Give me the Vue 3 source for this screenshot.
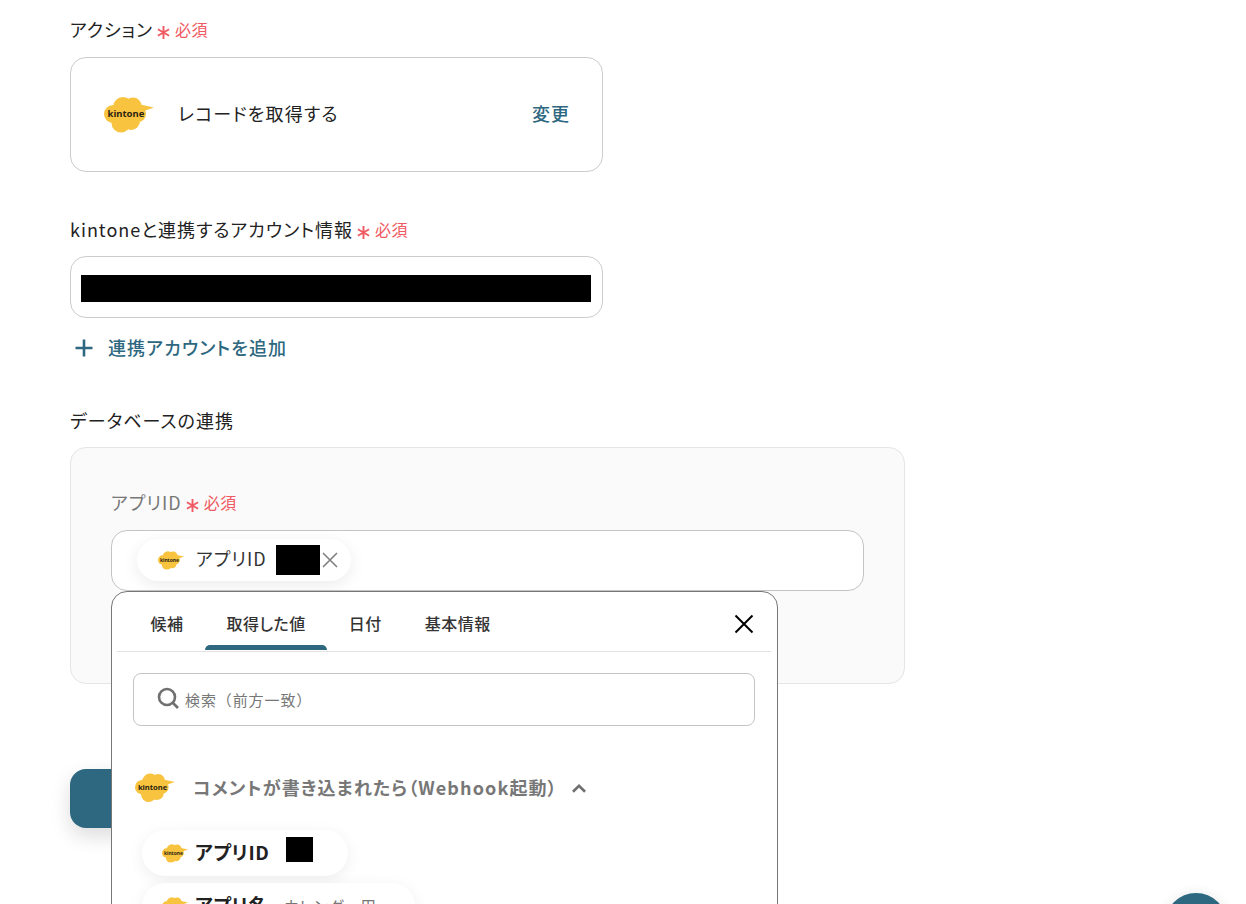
<script setup>
import { h } from 'vue'

// kintone のロゴ（雲＋吹き出しの尾）
const KintoneLogo = () =>
  h('svg', { viewBox: '0 0 50 36', 'aria-hidden': 'true' }, [
    h('g', { fill: '#f8c33f' }, [
      h('circle', { cx: 9, cy: 17, r: 9 }),
      h('circle', { cx: 19, cy: 10, r: 10 }),
      h('circle', { cx: 29, cy: 9, r: 8.5 }),
      h('circle', { cx: 34, cy: 17, r: 8 }),
      h('circle', { cx: 27, cy: 24, r: 9 }),
      h('circle', { cx: 17, cy: 26, r: 9.5 }),
      h('polygon', { points: '34,7 50,10.5 37,15' })
    ]),
    h('text', {
      x: 22,
      y: 20,
      'text-anchor': 'middle',
      'font-size': 9.5,
      'font-weight': 700,
      'font-family': '"Noto Sans", sans-serif',
      fill: '#2b2411'
    }, 'kintone')
  ])

// 必須マーク
const RequiredStar = () =>
  h('svg', { viewBox: '0 0 13 13', 'aria-hidden': 'true' }, [
    h('path', {
      d: 'M6.5 0v13M0.9 3.2l11.2 6.6M12.1 3.2L0.9 9.8',
      fill: 'none',
      stroke: '#ef5a63',
      'stroke-width': 1.9
    })
  ])

const tabs = [
  { label: '候補' },
  { label: '取得した値', active: true },
  { label: '日付' },
  { label: '基本情報' }
]
</script>

<template>
  <div class="page">
    <section class="field">
      <div class="label">アクション<span class="required"><RequiredStar class="star" />必須</span></div>
      <div class="action-card">
        <KintoneLogo class="logo-lg" />
        <span class="action-name">レコードを取得する</span>
        <span class="change">変更</span>
      </div>
    </section>

    <section class="field account">
      <div class="label">kintoneと連携するアカウント情報<span class="required"><RequiredStar class="star" />必須</span></div>
      <div class="account-box"><div class="masked"></div></div>
      <div class="add-account">
        <svg class="plus" viewBox="0 0 18 18" aria-hidden="true">
          <path d="M9 0.5v17M0.5 9h17" fill="none" stroke="#2d6880" stroke-width="2.6" />
        </svg>
        <span class="add-text">連携アカウントを追加</span>
      </div>
    </section>

    <section class="field database">
      <div class="label">データベースの連携</div>
      <div class="panel">
        <div class="label sub">アプリID<span class="required"><RequiredStar class="star" />必須</span></div>
        <div class="input-wrap">
          <div class="token-input">
            <div class="chip">
              <KintoneLogo class="logo-sm" />
              <span class="chip-text">アプリID</span>
              <span class="chip-mask"></span>
              <svg class="chip-close" viewBox="0 0 18 18" aria-hidden="true">
                <path d="M2 2l14 14M16 2L2 16" fill="none" stroke="#808080" stroke-width="1.6" />
              </svg>
            </div>
          </div>

          <div class="dropdown">
            <div class="tabs">
              <div v-for="tab in tabs" :key="tab.label" class="tab" :class="{ active: tab.active }">{{ tab.label }}</div>
              <svg class="close" viewBox="0 0 20 20" aria-hidden="true">
                <path d="M1.5 1.5l17 17M18.5 1.5l-17 17" fill="none" stroke="#000" stroke-width="2" />
              </svg>
            </div>
            <div class="search">
              <svg class="search-icon" viewBox="0 0 22 22" aria-hidden="true">
                <circle cx="10" cy="10" r="8" fill="none" stroke="#707070" stroke-width="2.6" />
                <path d="M16 16l5 5" fill="none" stroke="#707070" stroke-width="2.6" />
              </svg>
              <span class="search-text">検索（前方一致）</span>
            </div>
            <div class="group-head">
              <KintoneLogo class="logo-md" />
              <span class="group-title">コメントが書き込まれたら（Webhook起動）</span>
              <svg class="chevron" viewBox="0 0 14 10" aria-hidden="true">
                <path d="M1.5 8L7 2.5 12.5 8" fill="none" stroke="#707070" stroke-width="2.4" />
              </svg>
            </div>
            <div class="value-list">
              <div class="value-chip first">
                <KintoneLogo class="logo-sm" />
                <span class="value-name">アプリID</span>
                <span class="value-mask"></span>
              </div>
              <div class="value-chip second">
                <KintoneLogo class="logo-sm" />
                <span class="value-name">アプリ名</span>
                <span class="value-sample">カレンダー用</span>
              </div>
            </div>
          </div>
        </div>
      </div>
    </section>

    <div class="next-btn"></div>
    <div class="fab"></div>
  </div>
</template>

<style>
html, body {
  margin: 0;
  background: #fff;
  overflow: hidden;
}
</style>

<style scoped>
.page {
  position: relative;
  height: 904px;
  overflow: hidden;
  box-sizing: border-box;
  padding: 17px 0 0 70px;
  font-family: "Noto Sans CJK JP", "Noto Sans", sans-serif;
  font-feature-settings: "palt";
  color: #222;
  background: #fff;
}

.label {
  display: flex;
  align-items: center;
  box-sizing: border-box;
  height: 26px;
  padding-bottom: 1px;
  font-size: 18px;
  font-weight: 400;
  line-height: 23px;
  letter-spacing: 1px;
}

.required {
  display: flex;
  align-items: center;
  margin-left: 4px;
  font-size: 16px;
  font-weight: 400;
  letter-spacing: 0.5px;
  color: #ef5a63;
}

.star {
  width: 13px;
  height: 13px;
  margin: 5px 5px 0 0;
  flex: none;
}

.action-card {
  display: flex;
  align-items: center;
  box-sizing: border-box;
  width: 533px;
  height: 115px;
  margin-top: 14px;
  padding: 0 32px 0 33px;
  border: 1px solid #ccc;
  border-radius: 16px;
}

.logo-lg {
  width: 50px;
  height: 36px;
  flex: none;
  margin-top: 1px;
}

.action-name {
  margin: 0 0 3px 24px;
  font-size: 18px;
  letter-spacing: 1.2px;
}

.change {
  margin: 0 0 3px auto;
  font-size: 18px;
  font-weight: 500;
  letter-spacing: 1px;
  color: #2d6880;
}

.account {
  margin-top: 45px;
}

.account-box {
  box-sizing: border-box;
  width: 533px;
  height: 62px;
  margin-top: 13px;
  padding: 18px 11px 0 10px;
  border: 1px solid #ccc;
  border-radius: 16px;
}

.masked {
  height: 27px;
  background: #000;
}

.add-account {
  display: flex;
  align-items: center;
  height: 26px;
  margin-top: 17px;
  padding-left: 5px;
  font-size: 18px;
  font-weight: 500;
  letter-spacing: 1.1px;
  color: #2d6880;
}

.add-text {
  margin-bottom: 2px;
}

.plus {
  width: 18px;
  height: 18px;
  margin-right: 15px;
}

.database {
  margin-top: 47px;
}

.panel {
  box-sizing: border-box;
  width: 835px;
  height: 237px;
  margin-top: 13px;
  padding: 42px 40px 0;
  background: #fafafa;
  border: 1px solid #e5e5e5;
  border-radius: 16px;
}

.label.sub {
  color: #777;
}

.input-wrap {
  position: relative;
  margin-top: 14px;
}

.token-input {
  box-sizing: border-box;
  width: 753px;
  height: 61px;
  padding: 8px 0 0 25px;
  background: #fff;
  border: 1px solid #c4c4c4;
  border-radius: 16px;
}

.chip {
  display: inline-flex;
  align-items: center;
  box-sizing: border-box;
  width: 214px;
  height: 42px;
  padding-left: 21px;
  background: #fff;
  border-radius: 21px;
  box-shadow: 0 4px 16px rgba(0, 0, 0, 0.08);
}

.logo-sm {
  width: 26px;
  height: 19px;
  flex: none;
}

.chip-text {
  margin: 0 0 5px 12px;
  font-size: 18px;
  letter-spacing: 1px;
  color: #333;
}

.chip-mask {
  width: 44px;
  height: 30px;
  margin-left: 9px;
  background: #000;
}

.chip-close {
  width: 18px;
  height: 18px;
  margin-left: 1px;
}

.dropdown {
  position: absolute;
  top: 61px;
  left: 0;
  box-sizing: border-box;
  width: 667px;
  height: 340px;
  padding: 0 6px 0 5px;
  background: #fff;
  border: 1px solid #777;
  border-radius: 16px 16px 0 0;
}

.tabs {
  position: relative;
  display: flex;
  height: 59px;
  padding-left: 12px;
  border-bottom: 1px solid #e3e3e3;
}

.tab {
  position: relative;
  box-sizing: border-box;
  padding: 19px 21.5px 0;
  font-size: 16px;
  line-height: 24px;
  font-weight: 500;
  letter-spacing: 0.5px;
  color: #333;
}

.tab.active::after {
  content: "";
  position: absolute;
  left: 0;
  right: 0;
  bottom: 1px;
  height: 5px;
  background: #2d6880;
  border-radius: 5px 5px 0 0;
}

.close {
  position: absolute;
  top: 22px;
  right: 17px;
  width: 20px;
  height: 20px;
}

.search {
  display: flex;
  align-items: center;
  box-sizing: border-box;
  height: 53px;
  margin: 21px 16px 0;
  padding-left: 23px;
  border: 1px solid #c4c4c4;
  border-radius: 8px;
  font-size: 15px;
  color: #777;
}

.search-icon {
  width: 22px;
  height: 22px;
  margin: 0 6px 3px 0;
  flex: none;
}

.search-text {
  font-feature-settings: normal;
  letter-spacing: 0.9px;
}

.group-head {
  display: flex;
  align-items: center;
  height: 36px;
  margin: 44px 0 0 18px;
}

.logo-md {
  width: 40px;
  height: 30px;
  flex: none;
}

.group-title {
  margin: 0 0 3px 18px;
  font-size: 18px;
  font-weight: 700;
  letter-spacing: 1.1px;
  color: #777;
}

.chevron {
  width: 16px;
  height: 11px;
  margin-left: 13px;
}

.value-list {
  display: flex;
  flex-direction: column;
  align-items: flex-start;
  gap: 7px;
  margin: 24px 0 0 25px;
}

.value-chip {
  display: flex;
  align-items: center;
  box-sizing: border-box;
  height: 46px;
  padding-left: 20px;
  background: #fff;
  border-radius: 23px;
  box-shadow: 0 4px 16px rgba(0, 0, 0, 0.07);
}

.value-chip.first {
  width: 206px;
}

.value-chip.second {
  width: 273px;
}

.value-name {
  margin: 0 0 3px 7px;
  font-size: 19px;
  font-weight: 700;
  letter-spacing: 0.6px;
  color: #222;
}

.value-mask {
  align-self: flex-start;
  width: 27px;
  height: 25px;
  margin: 7px 0 0 17px;
  background: #000;
}

.value-sample {
  margin-left: 16px;
  font-size: 16px;
  letter-spacing: 0.5px;
  color: #777;
}

.next-btn {
  width: 260px;
  height: 59px;
  margin-top: 85px;
  background: #2d6880;
  border-radius: 16px;
  box-shadow: 0 8px 20px rgba(0, 0, 0, 0.14);
}

.fab {
  position: absolute;
  left: 1165px;
  top: 893px;
  width: 62px;
  height: 62px;
  background: #2d6880;
  border-radius: 50%;
  box-shadow: 0 2px 14px rgba(0, 0, 0, 0.12);
}
</style>
